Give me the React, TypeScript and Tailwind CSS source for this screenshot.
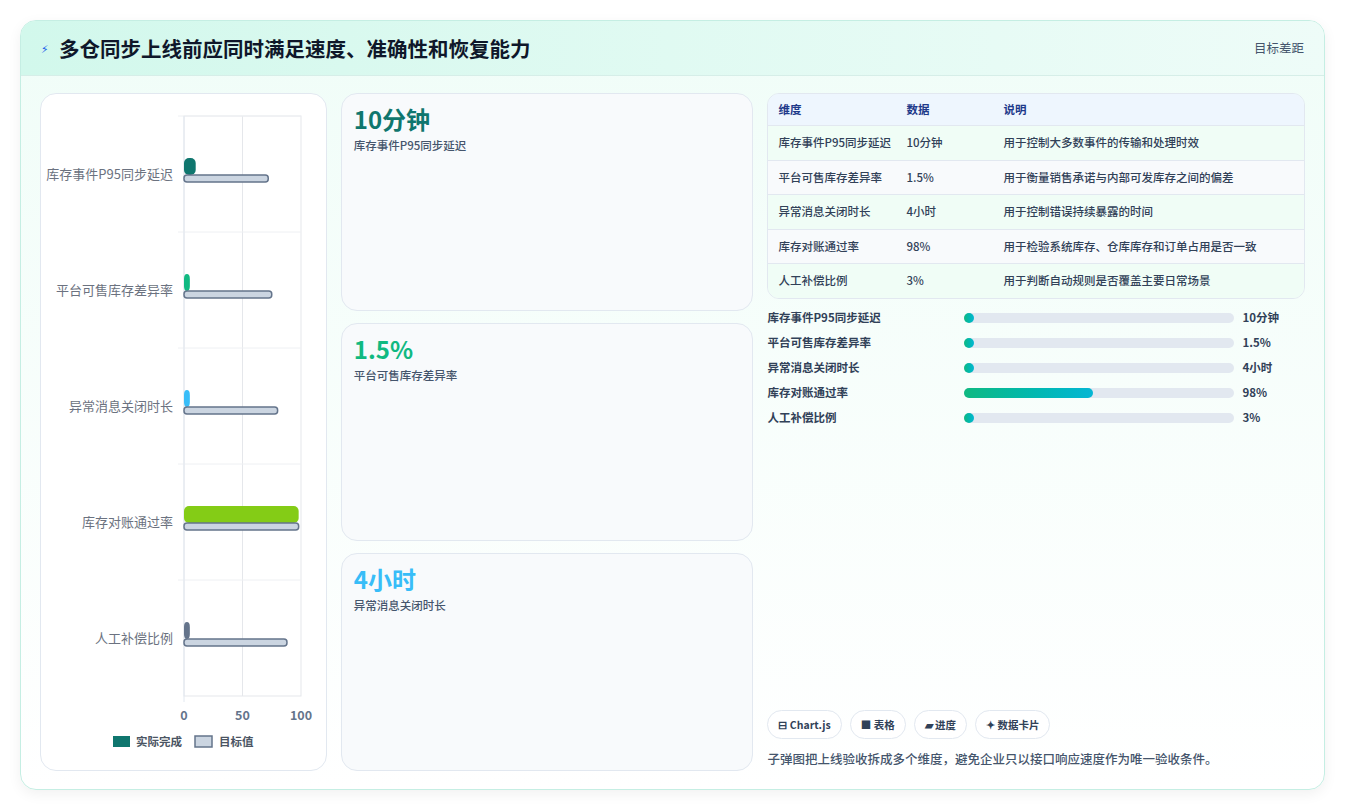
import React from "react";

const F = { fontFamily: '"Noto Sans CJK SC","Noto Sans",sans-serif' };

const rows = [
  ["库存事件P95同步延迟", "10分钟", "用于控制大多数事件的传输和处理时效"],
  ["平台可售库存差异率", "1.5%", "用于衡量销售承诺与内部可发库存之间的偏差"],
  ["异常消息关闭时长", "4小时", "用于控制错误持续暴露的时间"],
  ["库存对账通过率", "98%", "用于检验系统库存、仓库库存和订单占用是否一致"],
  ["人工补偿比例", "3%", "用于判断自动规则是否覆盖主要日常场景"],
];

function Chart() {
  const x0 = 143, w = 117;
  const data = [
    { l: "库存事件P95同步延迟", a: 10, t: 72, c: "#0f766e" },
    { l: "平台可售库存差异率", a: 5, t: 75, c: "#10b981" },
    { l: "异常消息关闭时长", a: 5, t: 80, c: "#38bdf8" },
    { l: "库存对账通过率", a: 98, t: 98, c: "#84cc16" },
    { l: "人工补偿比例", a: 5, t: 88, c: "#64748b" },
  ];
  return (
    <svg width="286" height="677" viewBox="0 0 286 677" style={F}>
      <rect x={x0} y={22} width={w} height={580} fill="none" stroke="#e5e7eb" />
      <line x1={x0 + w / 2} y1={22} x2={x0 + w / 2} y2={602} stroke="#e5e7eb" />
      {[0, 1, 2, 3, 4].map((i) => (
        <line key={i} x1={x0 - 6} x2={x0 + w} y1={22 + i * 116} y2={22 + i * 116} stroke="#eef0f3" />
      ))}
      <line x1={x0} y1={22} x2={x0} y2={608} stroke="#e2e8f0" />
      {data.map((d, i) => {
        const cy = 22 + i * 116 + 58;
        return (
          <g key={i}>
            <text x={x0 - 11} y={cy + 5} textAnchor="end" fontSize="13" fill="#6b7280">{d.l}</text>
            <rect x={x0} y={cy - 16} width={(w * d.a) / 100} height={17} rx={5} fill={d.c} />
            <rect x={x0} y={cy + 1} width={(w * d.t) / 100} height={7} rx={3} fill="#cbd5e1" stroke="#64748b" strokeWidth="1.5" />
          </g>
        );
      })}
      {[0, 50, 100].map((v) => (
        <text key={v} x={x0 + (w * v) / 100} y={626} textAnchor="middle" fontSize="12.5" fontWeight="bold" fill="#64748b">{v}</text>
      ))}
      <rect x={72} y={642} width={17} height={11} fill="#0f766e" />
      <text x={95} y={652} fontSize="11.5" fill="#4b5563" fontWeight="bold">实际完成</text>
      <rect x={154} y={642} width={17} height={11} fill="#cbd5e1" stroke="#64748b" strokeWidth="1.5" />
      <text x={178} y={652} fontSize="11.5" fill="#4b5563" fontWeight="bold">目标值</text>
    </svg>
  );
}

function Kpi({ v, l, c }: { v: string; l: string; c: string }) {
  return (
    <div className="h-[218px] rounded-2xl border border-slate-200 bg-[#f8fafc] px-[12px] pt-[9px]">
      <div className={`text-[24px] font-bold leading-[32px] ${c}`}>{v}</div>
      <div className="text-[11.5px] font-medium text-slate-600 mt-[2px]">{l}</div>
    </div>
  );
}

const prog = [
  ["库存事件P95同步延迟", 10, "10分钟"],
  ["平台可售库存差异率", 10, "1.5%"],
  ["异常消息关闭时长", 10, "4小时"],
  ["库存对账通过率", 129, "98%"],
  ["人工补偿比例", 10, "3%"],
] as const;

export default function App() {
  return (
    <div className="w-[1345px] h-[806px] bg-white pt-[20px] px-[20px]" style={F}>
      <div className="w-[1305px] h-[770px] rounded-2xl border border-[#c5eee3] overflow-hidden bg-gradient-to-b from-[#f0fdf8] to-white shadow-[0_4px_14px_rgba(0,0,0,0.06)]">
        <div className="h-[55px] flex items-center justify-between px-[20px] bg-gradient-to-r from-[#d2f8ec] to-[#eefcf8] border-b border-[#d6eee8]">
          <div className="flex items-center gap-[10px]">
            <span className="text-[#2563eb] text-[11px]">⚡︎</span>
            <span className="text-[20.5px] font-bold text-[#0f172a]">多仓同步上线前应同时满足速度、准确性和恢复能力</span>
          </div>
          <span className="text-[12.5px] text-slate-600">目标差距</span>
        </div>
        <div className="flex gap-[14px] px-[19px] pt-[17px]">
          <div className="w-[287px] h-[678px] rounded-2xl border border-slate-200 bg-white overflow-hidden">
            <Chart />
          </div>
          <div className="w-[413px] flex flex-col gap-[12px]">
            <Kpi v="10分钟" l="库存事件P95同步延迟" c="text-[#0f766e]" />
            <Kpi v="1.5%" l="平台可售库存差异率" c="text-[#10b981]" />
            <Kpi v="4小时" l="异常消息关闭时长" c="text-[#38bdf8]" />
          </div>
          <div className="w-[538px] h-[678px] flex flex-col">
            <div className="rounded-xl border border-slate-200 overflow-hidden text-[11.5px] font-medium text-slate-700">
              <div className="flex h-[32px] items-center bg-[#eef6fe] border-b border-slate-200 text-[#1e3a8a] font-bold">
                <div className="w-[138px] pl-[10px]">维度</div>
                <div className="w-[97px]">数据</div>
                <div>说明</div>
              </div>
              {rows.map((r, i) => (
                <div key={i} className={`flex py-[8px] border-b border-slate-200 last:border-b-0 leading-[17.5px] ${i % 2 ? "bg-[#f8fafc]" : "bg-[#f0fdf6]"}`}>
                  <div className="w-[138px] pl-[10px] pr-[14px]">{r[0]}</div>
                  <div className="w-[97px]">{r[1]}</div>
                  <div>{r[2]}</div>
                </div>
              ))}
            </div>
            <div className="mt-[10px] flex flex-col gap-[7px] text-[11.5px] font-bold text-slate-700">
              {prog.map((p, i) => (
                <div key={i} className="flex items-center h-[18px]">
                  <div className="w-[197px]">{p[0]}</div>
                  <div className="w-[270px] h-[10px] rounded-full bg-[#e2e8f0]">
                    <div className="h-[10px] rounded-full bg-gradient-to-r from-[#10b981] to-[#06b6d4]" style={{ width: p[1] }} />
                  </div>
                  <div className="ml-[8px]">{p[2]}</div>
                </div>
              ))}
            </div>
            <div className="mt-auto flex gap-[8px] text-[10.5px] font-bold text-slate-700">
              {["⊟ Chart.js", "■ 表格", "▰ 进度", "✦ 数据卡片"].map((t) => (
                <span key={t} className="h-[29px] px-[10px] flex items-center rounded-full border border-slate-200 bg-white">{t}</span>
              ))}
            </div>
            <div className="mt-[11px] mb-[2px] text-[12.5px] font-medium text-slate-600">子弹图把上线验收拆成多个维度，避免企业只以接口响应速度作为唯一验收条件。</div>
          </div>
        </div>
      </div>
    </div>
  );
}
